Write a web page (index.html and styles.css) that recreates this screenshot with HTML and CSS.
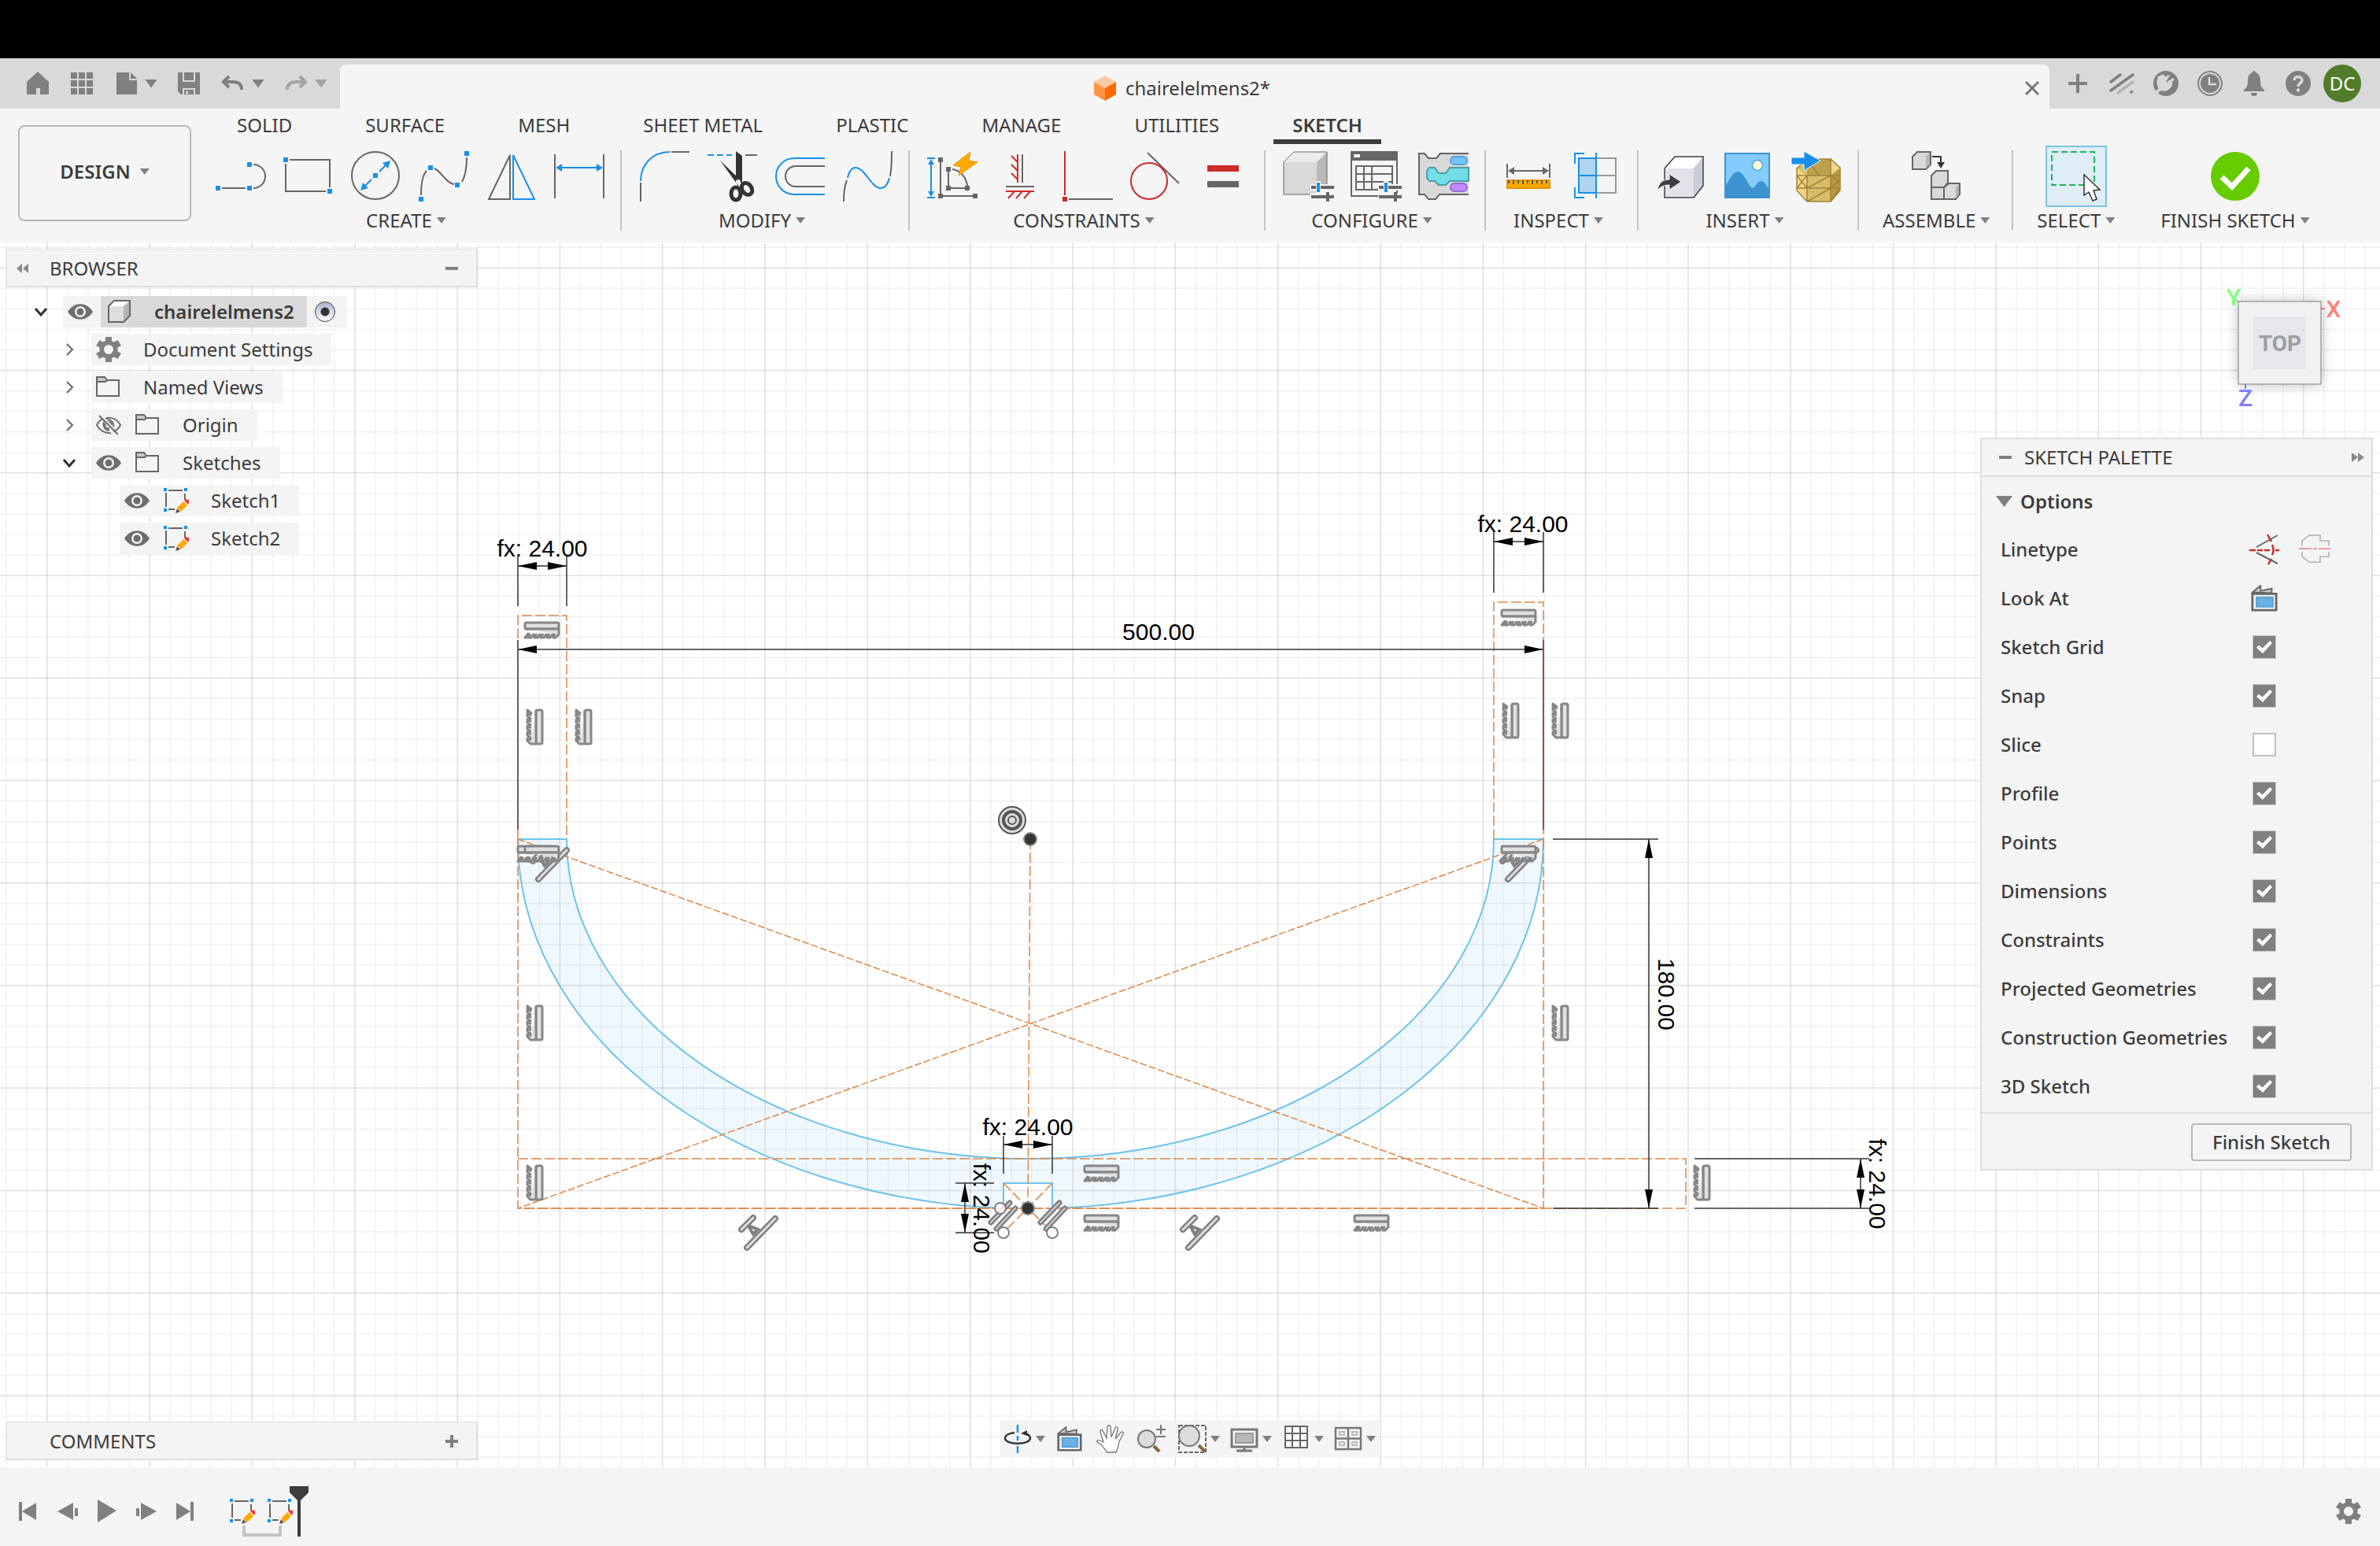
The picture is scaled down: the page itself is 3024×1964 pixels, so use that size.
FILE: index.html
```html
<!DOCTYPE html>
<html lang="en">
<head>
<meta charset="utf-8">
<title>chairelelmens2</title>
<link rel="stylesheet" href="styles.css">
</head>
<body>
<svg class="defs" aria-hidden="true">
  <symbol id="i-eye" viewBox="0 0 32 32"><path d="M0 16C8 3 24 3 32 16C24 29 8 29 0 16Z" fill="#6e6e6e"/><circle cx="16" cy="16" r="7" fill="#f4f4f4"/><circle cx="16" cy="16" r="4.500" fill="#6e6e6e"/></symbol>
  <symbol id="i-eye-off" viewBox="0 0 32 32"><path d="M12 7.500C20 5 27 9 31 16C29 20 26 23 22 24.500M19 26C11 27 4 22 1 16C3 12 6 9 9 8M10 12a8 8 0 0 0 7 11M14 9.500a7 7 0 0 1 8 9M12 14a4 4 0 0 0 5 6M16 12a4 4 0 0 1 4 4M4 4L28 28" fill="none" stroke="#6e6e6e" stroke-width="2"/></symbol>
  <symbol id="i-folder" viewBox="0 0 32 32"><path d="M1 9V3H11L14 7V9Z" fill="#c8c8c8" stroke="#666" stroke-width="2"/><path d="M1 9H12L14 7H29V27H1Z" fill="#f4f4f4" stroke="#666" stroke-width="2"/></symbol>
  <symbol id="i-gear" viewBox="0 0 32 32"><path fill-rule="evenodd" fill="#808080" d="M12 0H20V5L23 6.500L27.500 4L32 11L27.500 13.500V18.500L32 21L27.500 28L23 25.500L20 27V32H12V27L9 25.500L4.500 28L0 21L4.500 18.500V13.500L0 11L4.500 4L9 6.500L12 5ZM16 10a6 6 0 1 0 0 12a6 6 0 1 0 0-12Z"/></symbol>
  <symbol id="i-body" viewBox="0 0 32 32"><path d="M2 9L9 2H29L22 9Z" fill="#fff"/><path d="M2 9H21V29H2Z" fill="#dedede"/><path d="M21 9L29 2V21L21 29Z" fill="#b4b4b4"/><path d="M2 9L9 2H29V21L21 29H2Z" fill="none" stroke="#666" stroke-width="2"/></symbol>
  <symbol id="i-sketch" viewBox="0 0 32 32"><path d="M6 3H24M3 6V24M27 7V15M6 27H14" stroke="#666" stroke-width="2" fill="none"/><path d="M0 0h4v4H0zM26 0h4v4h-4zM0 26h4v4H0z" fill="#1890ea"/><path d="M17 25L25 17L30 22L22 30Z" fill="#fa0"/><path d="M17 26L21 30L15 32Z" fill="#555"/><path d="M26 16L28 14.500a3 3 0 0 1 4 4L31 21Z" fill="#f33"/></symbol>
  <symbol id="i-lookat" viewBox="0 0 36 36"><path d="M2 10L13 1V8L28 5V11Z" fill="#c8c8c8" stroke="#666" stroke-width="2"/><path d="M2 12H34V34H2Z" fill="#f4f4f4" stroke="#666" stroke-width="3"/><path d="M7.500 16.500H29.500V29.500H7.500Z" fill="#69b0e6" stroke="#5a9fd4" stroke-width="2"/></symbol>
  <symbol id="i-sliders" viewBox="0 0 32 28"><path d="M2 8H32M2 20H32" stroke="#f4f4f4" stroke-width="8"/><path d="M3 8H32M3 20H32M24 14V26" stroke="#666" stroke-width="4"/><path d="M12 0V16" stroke="#f4f4f4" stroke-width="6"/><path d="M12 2V14" stroke="#1890ea" stroke-width="4"/></symbol>
  <symbol id="g-hatch" viewBox="0 0 48 24" overflow="visible"><g fill="#e0e0e0" stroke="#868686" stroke-width="3" stroke-linejoin="round"><rect x="2" y="2" width="43" height="8" rx="2"/><path d="M2 10H45V17L41 21H38L40 16M38 16L34 21H30L33 16M30 16L26 21H22L25 16M22 16L18 21H14L17 16M14 16L10 21H6L9 16M6 16L4 21H2Z"/></g></symbol>
  <symbol id="g-perp" viewBox="0 0 52 48" overflow="visible"><g stroke-linecap="round" fill="none"><path d="M48 6L12 43M20 5L5 20" stroke="#808080" stroke-width="8"/><path d="M14 15L20 26L26 20Z" stroke="#808080" stroke-width="4"/><path d="M48 6L12 43M20 5L5 20" stroke="#ddd" stroke-width="3"/></g></symbol>
  <symbol id="g-par" viewBox="0 0 36 38" overflow="visible"><g stroke-linecap="round"><path d="M27 3L3 28M34 10L10 36" stroke="#808080" stroke-width="7"/><path d="M27 3L3 28M34 10L10 36" stroke="#ccc" stroke-width="2"/></g></symbol>
</svg>

<div class="letterbox"></div>

<header>
  <div class="titlebar">
    <nav class="quick" aria-label="Quick access">
      <button class="ico" aria-label="Home"><svg viewBox="0 0 32 32"><path d="M2 14L16 1L30 14V30H19V22H14V30H2Z" fill="#808080"/></svg></button>
      <button class="ico" aria-label="Data panel"><svg viewBox="0 0 32 32"><path d="M2 2h8v8H2zM12 2h8v8h-8zM22 2h8v8h-8zM2 12h8v8H2zM12 12h8v8h-8zM22 12h8v8h-8zM2 22h8v8H2zM12 22h8v8h-8zM22 22h8v8h-8z" fill="#808080"/></svg></button>
      <button class="ico split" aria-label="File"><svg viewBox="0 0 32 32"><path d="M4 2H20V12H30V30H4ZM22 2L30 10H22Z" fill="#808080"/></svg><i class="caret big"></i></button>
      <button class="ico" aria-label="Save"><svg viewBox="0 0 32 32"><path d="M2 2H8V14H24V2H30V30H24V22H8V30H6L2 26ZM10 2H22V12H10ZM10 24H22V30H10Z" fill="#808080"/><path d="M12 26h3v3h-3z" fill="#d9d9d9"/></svg></button>
      <button class="ico split" aria-label="Undo"><svg viewBox="0 0 32 32"><path d="M11 7L4 14L11 21M4 14H16C24 14 27 18 27 24" fill="none" stroke="#808080" stroke-width="4"/></svg><i class="caret big"></i></button>
      <button class="ico split dim" aria-label="Redo"><svg viewBox="0 0 32 32"><path d="M21 7L28 14L21 21M28 14H16C8 14 5 18 5 24" fill="none" stroke="#808080" stroke-width="4"/></svg><i class="caret big"></i></button>
    </nav>
    <div class="doc-tab">
      <div class="doc-title"><svg viewBox="0 0 28 32" width="28" height="32"><path d="M0 8L14 0L28 8L14 16Z" fill="#fcc9a4"/><path d="M0 8L14 16V32L0 24Z" fill="#ff944a"/><path d="M28 8L14 16V32L28 24Z" fill="#ff6a00"/></svg><span>chairelelmens2*</span></div>
      <button class="close" aria-label="Close"><svg viewBox="0 0 20 20" width="20" height="20"><path d="M2 2L18 18M18 2L2 18" stroke="#777" stroke-width="3"/></svg></button>
    </div>
    <nav class="account" aria-label="Account">
      <button class="ico" aria-label="New tab"><svg viewBox="0 0 32 32"><path d="M4 16H28M16 4V28" stroke="#808080" stroke-width="4"/></svg></button>
      <button class="ico" aria-label="Extensions"><svg viewBox="0 0 32 32" stroke-linecap="round" stroke-width="3.500"><path d="M2 14L14 5M2 25L30 5M28 27L28.500 26.500" stroke="#808080"/><path d="M11 28L30 14" stroke="#b4b4b4"/></svg></button>
      <button class="ico" aria-label="Online status"><svg viewBox="0 0 32 32"><circle cx="16" cy="16" r="16" fill="#808080"/><path d="M6 9L12 6L16 10L20 6M21 14L26 10M8 8C4 15 6 22 12 24C18 25 21 22 23 16L13 8Z" fill="#d9d9d9" stroke="#d9d9d9" stroke-width="3"/><path d="M17 14L21 8" stroke="#808080" stroke-width="2"/><path d="M10 22L2 29" stroke="#d9d9d9" stroke-width="4"/></svg></button>
      <button class="ico" aria-label="Job status"><svg viewBox="0 0 32 32"><circle cx="16" cy="16" r="15" fill="none" stroke="#808080" stroke-width="2"/><circle cx="16" cy="16" r="12" fill="#808080"/><path d="M15 8V17H24" fill="none" stroke="#d9d9d9" stroke-width="2.500"/></svg></button>
      <button class="ico" aria-label="Notifications"><svg viewBox="0 0 32 32"><path d="M14 2a2 2 0 0 1 4 0C23 4 24 8 24 14C24 20 26 22 29 24V26H3V24C6 22 8 20 8 14C8 8 9 4 14 2ZM12 28H20a4 4 0 0 1-8 0Z" fill="#808080"/></svg></button>
      <button class="ico" aria-label="Help"><svg viewBox="0 0 32 32"><circle cx="16" cy="16" r="16" fill="#808080"/><path d="M11 12C11 6 21 6 21 12C21 16 16 15 16 20" fill="none" stroke="#d9d9d9" stroke-width="3.500"/><circle cx="16" cy="24.500" r="2.200" fill="#d9d9d9"/></svg></button>
      <button class="avatar">DC</button>
    </nav>
  </div>

  <div class="toolbar">
    <button class="workspace">DESIGN<i class="caret"></i></button>
    <div class="ribbon">
      <nav class="tabs" aria-label="Toolbar tabs">
        <button>SOLID</button><button>SURFACE</button><button>MESH</button><button>SHEET METAL</button><button>PLASTIC</button><button>MANAGE</button><button>UTILITIES</button><button class="active">SKETCH</button>
      </nav>
      <div class="groups">
        <section class="group">
          <div class="tools">
            <button aria-label="Line"><svg viewBox="0 0 64 64"><path d="M8 47H38M48 17A15 15 0 0 1 48 47" class="g"/><path d="M0 44h6v6H0zM40 44h6v6h-6zM40 14h6v6h-6z" class="bf"/></svg></button>
            <button aria-label="Rectangle"><svg viewBox="0 0 64 64"><path d="M8 11H59V46M3 16V51H54" class="g"/><path d="M0 8h6v6H0zM56 48h6v6h-6z" class="bf"/></svg></button>
            <button aria-label="Circle"><svg viewBox="0 0 64 64"><circle cx="31" cy="31" r="30" class="g"/><path d="M36 26L45 17M26 36L17 45" class="b"/><path d="M28 28h6v6h-6zM50 12L40 15L47 22ZM12 50L15 40L22 47Z" class="bf"/></svg></button>
            <button aria-label="Spline"><svg viewBox="0 0 64 64"><path d="M3 56C3 40 5 30 10 25M20 22C30 27 34 40 45 42M55 39C60 30 61 20 61 8" class="g"/><path d="M0 58h6v6H0zM12 18h6v6h-6zM46 40h6v6h-6zM58 0h6v6h-6z" class="bf"/></svg></button>
            <button aria-label="Mirror"><svg viewBox="0 0 64 64"><path d="M30 5V61H3Z" class="g"/><path d="M34 5V61H61Z" class="b"/></svg></button>
            <button aria-label="Dimension"><svg viewBox="0 0 64 64"><path d="M1 4V60M63 4V60" class="g"/><path d="M8 21H56" class="b"/><path d="M2 21L10 16V26ZM62 21L54 16V26Z" class="bf"/></svg></button>
          </div>
          <button class="group-label">CREATE<i class="caret"></i></button>
        </section>
        <span class="sep"></span>
        <section class="group">
          <div class="tools">
            <button aria-label="Fillet"><svg viewBox="0 0 64 64"><path d="M2 40V64M41 1H64" class="g"/><path d="M2 38C2 18 16 1 39 1" class="b"/></svg></button>
            <button aria-label="Trim"><svg viewBox="0 0 64 64"><path d="M1 5H32" class="b" stroke-dasharray="8 4"/><path d="M49 5H64" class="g"/><path d="M37 0L45 6V40H37ZM17 12L40 34V44Z" fill="#333"/><g fill="none" stroke="#333" stroke-width="5"><ellipse cx="37" cy="54" rx="6" ry="8"/><ellipse cx="51" cy="48" rx="6" ry="8" transform="rotate(-35 51 48)"/></g><circle cx="40" cy="39" r="3" fill="#eee"/></svg></button>
            <button aria-label="Offset"><svg viewBox="0 0 64 64"><path d="M64 9H25A23 23 0 0 0 25 55H64" class="b"/><path d="M64 19H27A13 13 0 0 0 27 45H64" class="g"/></svg></button>
            <button aria-label="Edit spline"><svg viewBox="0 0 64 64"><path d="M2 64C2 54 3 44 6 37M61 32C63 22 63 10 63 0" class="g"/><path d="M7 34C9 25 12 21 17 21C29 21 37 47 49 47C55 47 58 42 60 34" class="b"/></svg></button>
          </div>
          <button class="group-label">MODIFY<i class="caret"></i></button>
        </section>
        <span class="sep"></span>
        <section class="group">
          <div class="tools">
            <button aria-label="Auto dimension"><svg viewBox="0 0 64 64"><path d="M17 11V57H61M27 23V47H51M32 23C42 24 50 34 51 44" class="g"/><path d="M0 9H10M0 59H10M5 14V54" class="b"/><path d="M5 10L9 17H1ZM5 58L9 51H1Z" class="bf"/><path d="M14 8h6v6h-6zM14 54h6v6h-6zM58 54h6v6h-6zM24 20h6v6h-6zM24 44h6v6h-6zM48 44h6v6h-6z" fill="#666"/><path d="M55 1L33 18L43 20L40 31L64 14L53 12Z" fill="#fa0" stroke="#e59400"/></svg></button>
            <button aria-label="Horizontal or vertical"><svg viewBox="0 0 64 64"><path d="M35 4V40M14 45H50" class="g"/><path d="M29 4V40M14 51H50M21 6L29 14M21 17L29 25M21 28L29 36M25 51L17 60M35 51L27 60M45 51L37 60" class="r"/></svg></button>
            <button aria-label="Perpendicular"><svg viewBox="0 0 64 64"><path d="M3 0V56" class="r"/><path d="M0 58h6v6H0z" fill="#cd2a2a"/><path d="M8 61H64" class="g"/></svg></button>
            <button aria-label="Tangent"><svg viewBox="0 0 64 64"><path d="M22 2L62 41" class="g"/><circle cx="24" cy="38" r="23" class="r"/></svg></button>
            <button aria-label="Equal"><svg viewBox="0 0 64 64"><path d="M12 18H52V26H12Z" fill="#cd2a2a"/><path d="M12 38H52V46H12Z" fill="#666"/></svg></button>
          </div>
          <button class="group-label">CONSTRAINTS<i class="caret"></i></button>
        </section>
        <span class="sep"></span>
        <section class="group">
          <div class="tools">
            <button aria-label="Configured body"><svg viewBox="0 0 64 64"><path d="M1 14L14 1H56L43 14Z" fill="#ececec"/><path d="M1 14H43V55H1Z" fill="#d9d9d9"/><path d="M43 14L56 1V42L43 55Z" fill="#b8b8b8"/><path d="M1 14L14 1H56V42L43 55H1Z" fill="none" stroke="#666"/><use href="#i-sliders" x="33" y="38" width="32" height="28"/></svg></button>
            <button aria-label="Configuration table"><svg viewBox="0 0 64 64"><path d="M1 1H59V57H1Z" class="g"/><path d="M0 0H60V12H0Z" fill="#666"/><path d="M4 4h8v4H4z" fill="#fff"/><path d="M7 19H53V49H7ZM7 29H53M7 39H53M17 19V49M27 19V49" class="g"/><use href="#i-sliders" x="33" y="38" width="32" height="28"/></svg></button>
            <button aria-label="Configuration rules"><svg viewBox="0 0 64 64"><path d="M64 3H28L23 9H13L8 3H1V55H8L13 61H22L27 55H64" fill="#d9d9d9" stroke="#666" stroke-width="2"/><path d="M64 21H40L35 28H26L21 21H14L11 25V34L14 38H21L26 43H35L40 38H64Z" fill="#73dde8" stroke="#48a0a8" stroke-width="2"/><rect x="41" y="7" width="21" height="10" rx="5" fill="#74c4ff" stroke="#559fd5" stroke-width="2"/><rect x="41" y="41" width="21" height="10" rx="5" fill="#be8cff" stroke="#956bd0" stroke-width="2"/></svg></button>
          </div>
          <button class="group-label">CONFIGURE<i class="caret"></i></button>
        </section>
        <span class="sep"></span>
        <section class="group">
          <div class="tools">
            <button aria-label="Measure"><svg viewBox="0 0 64 64"><path d="M5 16V34M59 16V34M10 25H54" class="g"/><path d="M6 25L14 20V30ZM58 25L50 20V30Z" fill="#666"/><path d="M5 37H59V47H5Z" fill="#fa0" stroke="#e59400" stroke-width="2"/><path d="M7 37V41M13 37V42M19 37V41M25 37V42M31 37V41M37 37V42M43 37V41M49 37V42M55 37V41" stroke="#555" stroke-width="2"/></svg></button>
            <button aria-label="Section analysis"><svg viewBox="0 0 64 64"><path d="M33 9H57V53H33M33 31H57" fill="none" stroke="#999" stroke-width="2"/><path d="M10 9H32V53H10Z" fill="#b1d5f0"/><path d="M10 9H32V53H10ZM10 31H32M32 2V60M5 16V3H17M5 46V59H17" class="b"/></svg></button>
          </div>
          <button class="group-label">INSPECT<i class="caret"></i></button>
        </section>
        <span class="sep"></span>
        <section class="group">
          <div class="tools">
            <button aria-label="Insert derive"><svg viewBox="0 0 64 64"><path d="M11 22L24 7H60L48 22Z" fill="#fff"/><path d="M11 22H48V59H11Z" fill="#e2e3e8"/><path d="M48 22L60 7V44L48 59Z" fill="#c9ccd6"/><path d="M11 22L24 7H60V44L48 59H11Z" fill="none" stroke="#3c3f44" stroke-width="1.500"/><path d="M2 50C3 41 8 36 17 36V29L32 39L17 49V43C10 43 6 45 2 50Z" fill="#3c3f44" stroke="#f4f4f4"/></svg></button>
            <button aria-label="Canvas"><svg viewBox="0 0 64 64"><path d="M2 3H58V59H2Z" fill="#84cbff" stroke="#3d93cf" stroke-width="2"/><path d="M2 45C10 32 13 26 18 26C26 26 32 46 37 47C41 46 43 38 47 38C52 38 54 42 58 50V59H2Z" fill="#3d93cf"/><circle cx="43" cy="18" r="6.500" fill="#fffdd0" stroke="#58a9dc" stroke-width="1.500"/></svg></button>
            <button aria-label="Insert mesh"><svg viewBox="0 0 64 64"><path d="M20 10H50L62 21V50L50 64H20L7 50V22Z" fill="#d8be69"/><path d="M20 10H50L62 21L50 31H20Z" fill="#bfa14b"/><path d="M50 31L62 21V50L50 64Z" fill="#b89840"/><path d="M7 22L20 31V64L7 50Z" fill="#f0d684"/><path d="M50 10L62 21L50 31Z" fill="#f0d684"/><path d="M20 10H50L62 21V50L50 64H20L7 50V22ZM7 31H62M7 47H62M20 31V64M50 10V64M20 47L50 31M20 64L50 47M36 31L20 12M50 31L62 40M50 47L62 36M50 64L62 46M7 31L20 47M7 47L20 31" fill="none" stroke="#a08238" stroke-width="1.500"/><path d="M0 8H16V0L37 12L16 25V17H0Z" fill="#1890ea" stroke="#f4f4f4"/></svg></button>
          </div>
          <button class="group-label">INSERT<i class="caret"></i></button>
        </section>
        <span class="sep"></span>
        <section class="group single">
          <div class="tools">
            <button aria-label="Joint"><svg viewBox="0 0 64 64"><g fill="#dadada" stroke="#666" stroke-width="2"><path d="M2 7L8 1H25V17L19 23H2Z"/><path d="M26 31L32 25H47V40L42 46V61H26Z"/><path d="M26 46H42L48 41H62V55L57 61H26Z"/><path d="M42 46V61"/></g><path d="M19 7L24 2V17L19 22ZM57 46L61 42V55L57 60Z" fill="#b4b4b4"/><path d="M27 7H38V15" fill="none" stroke="#333" stroke-width="2"/><path d="M33 14H43L38 22Z" fill="#333"/></svg></button>
          </div>
          <button class="group-label">ASSEMBLE<i class="caret"></i></button>
        </section>
        <span class="sep"></span>
        <section class="group single">
          <div class="tools">
            <button class="selected" aria-label="Select"><svg viewBox="0 0 64 64"><path d="M1 1H55V43H1Z" fill="none" stroke="#21b35a" stroke-width="2" stroke-dasharray="8 4"/><path d="M42 30V56L48 52L53 63L58 61L54 50L62 49Z" fill="#fff" stroke="#333" stroke-width="1.500"/></svg></button>
          </div>
          <button class="group-label">SELECT<i class="caret"></i></button>
        </section>
        <section class="group single">
          <div class="tools">
            <button aria-label="Finish sketch"><svg viewBox="0 0 64 64"><circle cx="32" cy="32" r="31" fill="#6c0"/><path d="M15 33L28 45L49 22" fill="none" stroke="#fff" stroke-width="7"/></svg></button>
          </div>
          <button class="group-label">FINISH SKETCH<i class="caret"></i></button>
        </section>
      </div>
    </div>
  </div>
</header>

<main class="stage">
  <svg class="drawing" role="img" aria-label="Sketch of a chair element">
    <g transform="translate(0 -308)">
      <g stroke-width="1600">
        <line x1="7" x2="100%" y1="1100" y2="1100" stroke="#000" stroke-opacity=".055" stroke-dasharray="1.500 24.564"/>
        <line x1="59" x2="100%" y1="1100" y2="1100" stroke="#000" stroke-opacity=".07" stroke-dasharray="1.500 128.820"/>
      </g>
      <g stroke-width="6400">
        <line x1="0" x2="0" y1="313.500" y2="2400" stroke="#000" stroke-opacity=".055" stroke-dasharray="1.500 24.550"/>
        <line x1="0" x2="0" y1="339.500" y2="2400" stroke="#000" stroke-opacity=".07" stroke-dasharray="1.500 128.750"/>
      </g>

      <path d="M658 1066A651 469 0 0 0 1275 1535V1503H1337V1535A651 469 0 0 0 1961 1066H1898A589 406 0 0 1 720 1066Z" fill="#35a8e8" fill-opacity=".08" stroke="#6ec3ea" stroke-width="2"/>

      <g fill="none" stroke="#dd8747" stroke-width="1.500" stroke-dasharray="13 4">
        <path d="M658 1066V782H720V1066"/>
        <path d="M1898 1066V765H1961V1066"/>
        <path d="M658 1066V1535H1961V1066"/>
        <path d="M658 1472H2142V1535H658"/>
        <path d="M658 1066L1961 1535M1961 1066L658 1535" stroke-dasharray="9 3"/>
        <path d="M1309 1066L1306 1535"/>
        <path d="M1275 1503L1337 1566M1337 1503L1275 1566"/>
      </g>

      <g fill="none" stroke="#333" stroke-width="1.500">
        <path d="M658 707V770M720 707V770M658 719H720"/>
        <path d="M1898 676V753M1961 676V753M1898 688H1961"/>
        <path d="M658 825H1961"/>
        <path d="M658 813V1054M1961 813V1054" stroke="#7d5c45" stroke-width="2"/>
        <path d="M1973 1066H2107M1973 1535H2107M2095 1066V1535"/>
        <path d="M2153 1472H2375M2153 1535H2375M2364 1472V1535"/>
        <path d="M1275 1443V1491M1337 1443V1491M1275 1454H1337"/>
        <path d="M1214 1503H1263M1214 1566H1263M1226 1503V1566"/>
      </g>
      <path d="M658 719l24-5v10zM720 719l-24-5v10zM1898 688l24-5v10zM1961 688l-24-5v10zM658 825l24-5v10zM1961 825l-24-5v10zM2095 1066l-5 24h10zM2095 1535l-5-24h10zM2364 1472l-5 24h10zM2364 1535l-5-24h10zM1275 1454l24-5v10zM1337 1454l-24-5v10zM1226 1503l-5 24h10zM1226 1566l-5-24h10z"/>

      <use href="#g-hatch" x="665" y="789" width="48" height="24"/>
      <use href="#g-hatch" x="1906" y="773" width="48" height="24"/>
      <use href="#g-hatch" x="656" y="1073" width="48" height="24"/>
      <use href="#g-perp" x="672" y="1074" width="52" height="48"/>
      <use href="#g-hatch" x="665" y="1073" width="48" height="24"/>
      <use href="#g-perp" x="1904" y="1074" width="52" height="48"/>
      <use href="#g-hatch" x="1906" y="1073" width="48" height="24"/>
      <use href="#g-hatch" x="1376" y="1479" width="48" height="24"/>
      <use href="#g-hatch" x="1376" y="1542" width="48" height="24"/>
      <use href="#g-hatch" x="1719" y="1542" width="48" height="24"/>
      <g transform="rotate(90)">
        <use href="#g-hatch" x="900" y="-691" width="48" height="24"/>
        <use href="#g-hatch" x="900" y="-753" width="48" height="24"/>
        <use href="#g-hatch" x="892" y="-1931" width="48" height="24"/>
        <use href="#g-hatch" x="892" y="-1994" width="48" height="24"/>
        <use href="#g-hatch" x="1276" y="-691" width="48" height="24"/>
        <use href="#g-hatch" x="1276" y="-1994" width="48" height="24"/>
        <use href="#g-hatch" x="1479" y="-691" width="48" height="24"/>
        <use href="#g-hatch" x="1479" y="-2174" width="48" height="24"/>
      </g>
      <use href="#g-perp" x="937" y="1542" width="52" height="48"/>
      <use href="#g-perp" x="1498" y="1542" width="52" height="48"/>
      <use href="#g-par" x="1256" y="1525" width="36" height="38"/>
      <use href="#g-par" x="1319" y="1525" width="36" height="38"/>

      <g fill="#fff" fill-opacity=".8" stroke="#808080" stroke-width="2"><circle cx="1271" cy="1535" r="7"/><circle cx="1275" cy="1566" r="7"/><circle cx="1337" cy="1566" r="7"/></g>
      <g fill="#333" stroke="#888" stroke-width="2"><circle cx="1309" cy="1066" r="8"/><circle cx="1306" cy="1535" r="8"/></g>
      <g fill="none" stroke="#555" stroke-width="2"><circle cx="1286" cy="1042" r="17" fill="#ddd"/><circle cx="1286" cy="1042" r="11" stroke-width="4"/><circle cx="1286" cy="1042" r="5"/></g>

      <g class="dims">
        <text x="689" y="707">fx: 24.00</text>
        <text x="1935" y="676">fx: 24.00</text>
        <text x="1472" y="813">500.00</text>
        <text x="1306" y="1442">fx: 24.00</text>
        <text transform="translate(2107 1263) rotate(90)">180.00</text>
        <text transform="translate(2375 1504) rotate(90)">fx: 24.00</text>
        <text transform="translate(1237 1535) rotate(90)">fx: 24.00</text>
      </g>
    </g>
  </svg>

  <aside class="left">
    <section>
      <div class="panel-head">
        <button class="collapse" aria-label="Collapse browser"><svg viewBox="0 0 16 14" width="16" height="14"><path d="M7 1V13L0 7ZM15 1V13L8 7Z" fill="#8a8a8a"/></svg></button>
        <h2>BROWSER</h2>
        <button aria-label="Minimize"><svg viewBox="0 0 16 16" width="16" height="16"><path d="M0 8H16" stroke="#808080" stroke-width="4"/></svg></button>
      </div>
      <ul class="tree">
        <li class="root"><button class="twisty open" aria-label="Collapse"><svg viewBox="0 0 16 16"><path d="M1 4L8 12L15 4" /></svg></button><div class="node"><svg><use href="#i-eye"/></svg><div class="current"><svg><use href="#i-body"/></svg><span>chairelelmens2</span></div><input type="radio" checked aria-label="Activate component"></div></li>
        <li><button class="twisty" aria-label="Expand"><svg viewBox="0 0 16 16"><path d="M5 1L12 8L5 15"/></svg></button><div class="node"><svg><use href="#i-gear"/></svg><span>Document Settings</span></div></li>
        <li><button class="twisty" aria-label="Expand"><svg viewBox="0 0 16 16"><path d="M5 1L12 8L5 15"/></svg></button><div class="node"><svg><use href="#i-folder"/></svg><span>Named Views</span></div></li>
        <li><button class="twisty" aria-label="Expand"><svg viewBox="0 0 16 16"><path d="M5 1L12 8L5 15"/></svg></button><div class="node"><svg><use href="#i-eye-off"/></svg><svg><use href="#i-folder"/></svg><span>Origin</span></div></li>
        <li><button class="twisty open" aria-label="Collapse"><svg viewBox="0 0 16 16"><path d="M1 4L8 12L15 4"/></svg></button><div class="node"><svg><use href="#i-eye"/></svg><svg><use href="#i-folder"/></svg><span>Sketches</span></div></li>
        <li class="leaf"><div class="node"><svg><use href="#i-eye"/></svg><svg><use href="#i-sketch"/></svg><span>Sketch1</span></div></li>
        <li class="leaf"><div class="node"><svg><use href="#i-eye"/></svg><svg><use href="#i-sketch"/></svg><span>Sketch2</span></div></li>
      </ul>
    </section>
    <div class="panel-head comments">
      <h2>COMMENTS</h2>
      <button aria-label="Expand comments"><svg viewBox="0 0 16 16" width="16" height="16"><path d="M0 8H16M8 0V16" stroke="#808080" stroke-width="4"/></svg></button>
    </div>
  </aside>

  <nav class="navbar" aria-label="Navigation">
    <button class="split" aria-label="Orbit"><svg viewBox="0 0 36 36"><path d="M18 0V10M18 14V20M18 27V36" stroke="#1890ea" stroke-width="2.500"/><path d="M14 10C6 11 2 13 2 17C2 26 34 26 34 17C34 14 31 12 26 10" fill="none" stroke="#333" stroke-width="2.500"/><path d="M22 11L30 7V14Z" fill="#333"/></svg><i class="caret"></i></button>
    <button aria-label="Look at"><svg viewBox="0 0 36 36"><use href="#i-lookat" x="2" y="2" width="32" height="32"/></svg></button>
    <button aria-label="Pan"><svg viewBox="0 0 36 36"><path d="M14 35C11 31 9 29 7 26L1 22C0 20 2 19 4 20L9 22L5 9C5 6 8 6 9 9L13 17L14 3C14 0 18 0 18 3L19 16L24 4C25 2 28 3 27 6L24 18L31 10C33 8 35 9 34 12L29 21C28 27 27 31 25 35Z" fill="#fff" stroke="#777" stroke-width="1.300"/></svg></button>
    <button aria-label="Zoom"><svg viewBox="0 0 36 36"><circle cx="12" cy="18" r="11" fill="#ddd" stroke="#777" stroke-width="2"/><path d="M21 27L28 34" stroke="#86663c" stroke-width="4"/><path d="M24 6H36M30 0V12M24 15H36" stroke="#777" stroke-width="2"/></svg></button>
    <button class="split" aria-label="Fit"><svg viewBox="0 0 36 36"><path d="M1 1H35V35H1Z" fill="none" stroke="#666" stroke-width="2" stroke-dasharray="5 2"/><circle cx="14" cy="14" r="13" fill="#ddd" stroke="#777" stroke-width="2"/><path d="M26 26L34 34" stroke="#86663c" stroke-width="4"/></svg><i class="caret"></i></button>
    <button class="split" aria-label="Display settings"><svg viewBox="0 0 36 36"><path d="M2 6H34V28H2Z" fill="#f4f4f4" stroke="#777" stroke-width="3"/><path d="M7 11H29V23H7Z" fill="#b8b8b8" stroke="#999" stroke-width="2"/><path d="M18 29V33M8 33H28" stroke="#777" stroke-width="3"/></svg><i class="caret"></i></button>
    <button class="split" aria-label="Grid"><svg viewBox="0 0 36 36"><path d="M4 2H32V29H4ZM4 11H32M4 20H32M13 2V29M23 2V29" fill="#fff" stroke="#666" stroke-width="2"/></svg><i class="caret"></i></button>
    <button class="split" aria-label="Viewports"><svg viewBox="0 0 36 36"><path d="M2 4H34V31H2ZM2 17.500H34M18 4V31" fill="#f4f4f4" stroke="#777" stroke-width="2.500"/><path d="M7 9H13V13H7ZM23 9H29V13H23ZM7 22H13V26H7ZM23 22H29V26H23Z" fill="none" stroke="#bbb" stroke-width="2"/></svg><i class="caret"></i></button>
  </nav>

  <aside class="right">
    <svg class="viewcube" viewBox="0 0 160 170" width="160" height="170" role="img" aria-label="View cube">
      <path d="M29 30V134" stroke="#8080ff" stroke-width="2"/>
      <path d="M118 32H130" stroke="#ff8080" stroke-width="2"/>
      <path d="M12 17L22 25" stroke="#80ff80" stroke-width="2"/>
      <rect class="cube" x="20" y="23" width="105" height="105" fill="#f0f0f1" stroke="#808080"/>
      <rect x="39" y="42" width="67" height="67" fill="#e6e7eb"/>
      <text x="73" y="86" class="face">TOP</text>
      <text x="14" y="28" class="axis" fill="#80ff80">Y</text>
      <text x="141" y="43" class="axis" fill="#ff8080">X</text>
      <text x="29" y="156" class="axis" fill="#8080ff">Z</text>
    </svg>
    <section class="palette">
      <div class="palette-head">
        <button aria-label="Minimize"><svg viewBox="0 0 16 16" width="16" height="16"><path d="M0 8H16" stroke="#808080" stroke-width="4"/></svg></button>
        <h2>SKETCH PALETTE</h2>
        <button aria-label="Expand palette"><svg viewBox="0 0 16 14" width="16" height="14"><path d="M0 1V13L8 7ZM8 1V13L16 7Z" fill="#8a8a8a"/></svg></button>
      </div>
      <div class="palette-body">
        <h3><i></i>Options</h3>
        <div class="row"><span>Linetype</span>
          <button aria-label="Construction"><svg viewBox="0 0 40 40" width="40" height="40"><path d="M10 17L37 2M10 24L37 38" stroke="#666" stroke-width="2"/><path d="M1 21H9M11 21H18M20 21H27M34 21H39M30 14C32 18 32 23 30 27M24 1L29 10M29 32L25 39" fill="none" stroke="#cd2a2a" stroke-width="2.500"/></svg></button>
          <button aria-label="Centerline"><svg viewBox="0 0 40 40" width="40" height="40"><path d="M4 15V9L13 2H27V9H38V15M4 23V29L13 36H27V29H38V23" fill="none" stroke="#c0c0c0" stroke-width="2"/><path d="M0 19H16M18 19H23M25 19H40" stroke="#e8a0a0" stroke-width="2"/></svg></button>
        </div>
        <div class="row"><span>Look At</span><button aria-label="Look at"><svg viewBox="0 0 36 36" width="34" height="34"><use href="#i-lookat"/></svg></button></div>
        <div class="row"><label for="c1">Sketch Grid</label><input id="c1" type="checkbox" checked></div>
        <div class="row"><label for="c2">Snap</label><input id="c2" type="checkbox" checked></div>
        <div class="row"><label for="c3">Slice</label><input id="c3" type="checkbox"></div>
        <div class="row"><label for="c4">Profile</label><input id="c4" type="checkbox" checked></div>
        <div class="row"><label for="c5">Points</label><input id="c5" type="checkbox" checked></div>
        <div class="row"><label for="c6">Dimensions</label><input id="c6" type="checkbox" checked></div>
        <div class="row"><label for="c7">Constraints</label><input id="c7" type="checkbox" checked></div>
        <div class="row"><label for="c8">Projected Geometries</label><input id="c8" type="checkbox" checked></div>
        <div class="row"><label for="c9">Construction Geometries</label><input id="c9" type="checkbox" checked></div>
        <div class="row"><label for="c10">3D Sketch</label><input id="c10" type="checkbox" checked></div>
      </div>
      <div class="palette-foot"><button>Finish Sketch</button></div>
    </section>
  </aside>
</main>

<footer class="timeline">
  <div class="playback">
    <button aria-label="Go to start"><svg viewBox="0 0 28 32"><path d="M2 4H6V28H2ZM24 5V27L6 16Z"/></svg></button>
    <button aria-label="Step back"><svg viewBox="0 0 28 32"><path d="M21 5V27L1 16ZM23 12H27V22H23Z"/></svg></button>
    <button aria-label="Play"><svg viewBox="0 0 28 32"><path d="M2 1V30L26 15Z"/></svg></button>
    <button aria-label="Step forward"><svg viewBox="0 0 28 32"><path d="M7 5V27L27 16ZM1 12H5V22H1Z"/></svg></button>
    <button aria-label="Go to end"><svg viewBox="0 0 28 32"><path d="M20 4H24V28H20ZM2 5V27L20 16Z"/></svg></button>
  </div>
  <div class="features">
    <button aria-label="Sketch1"><svg><use href="#i-sketch"/></svg></button>
    <button aria-label="Sketch2"><svg><use href="#i-sketch"/></svg></button>
    <i class="bracket"></i>
    <svg class="marker" viewBox="0 0 24 64" width="24" height="64"><path d="M0 0H24V8L14 18V64H10V18L0 8Z" fill="#3c3c3c"/></svg>
  </div>
  <button class="settings" aria-label="Timeline settings"><svg><use href="#i-gear"/></svg></button>
</footer>
</body>
</html>
```
FILE: styles.css
```css
* { box-sizing: border-box; }

body {
  margin: 0;
  min-height: 100vh;
  display: flex;
  flex-direction: column;
  background: #fff;
  color: #3c3c3c;
  font: 24px/32px "Noto Sans", "Open Sans", sans-serif;
}

button {
  margin: 0;
  padding: 0;
  border: 0;
  background: none;
  color: inherit;
  font: inherit;
  display: flex;
  align-items: center;
  justify-content: center;
}

svg { display: block; flex: none; }
h2, h3 { margin: 0; font-size: 24px; line-height: 32px; font-weight: 400; }
.defs { position: absolute; width: 0; height: 0; }

.caret {
  width: 12px;
  height: 8px;
  background: #808080;
  clip-path: polygon(0 0, 100% 0, 50% 100%);
}
.caret.big { width: 16px; height: 11px; }

.letterbox { height: 74px; background: #000; }

/* title bar */
.titlebar { display: flex; height: 64px; background: #d9d9d9; }
.quick { display: flex; align-items: center; gap: 24px; padding: 0 16px 0 32px; }
.ico svg { width: 32px; height: 32px; }
.split { gap: 8px; }
.dim { opacity: .6; }
.doc-tab {
  flex: 1;
  align-self: flex-end;
  height: 56px;
  display: flex;
  align-items: center;
  padding: 4px 12px 0 0;
  background: #f5f5f5;
  border-radius: 8px 8px 0 0;
}
.doc-title { flex: 1; display: flex; align-items: center; justify-content: center; gap: 12px; }
.account { display: flex; align-items: center; gap: 24px; padding: 0 24px 0 20px; }
.avatar {
  width: 48px;
  height: 48px;
  margin-left: -8px;
  border-radius: 50%;
  background: #527c2a;
  color: #fff;
}

/* toolbar */
.toolbar { display: flex; background: #f5f5f5; padding-bottom: 12px; }
.workspace {
  width: 220px;
  height: 122px;
  margin: 21px 9px 0 23px;
  padding-bottom: 4px;
  gap: 12px;
  border: 2px solid #b8b8b8;
  border-radius: 8px;
  font-weight: 600;
}
.ribbon { flex: 1; }
.tabs { display: flex; gap: 45px; padding-left: 25px; height: 47px; }
.tabs button { height: 45px; padding: 2px 24px 0; border-bottom: 6px solid transparent; white-space: nowrap; }
.tabs .active { border-color: #3c3c3c; font-weight: 600; }
.groups { display: flex; }
.group { padding: 0 20px 0 22px; display: flex; flex-direction: column; align-items: center; gap: 1px; }
.group.single { padding: 0 28px 0 30px; }
.tools { display: flex; align-items: center; gap: 22px; height: 78px; }
.tools svg { width: 64px; height: 64px; overflow: visible; }
.selected { width: 78px; height: 78px; background: #deedf6; border: 2px solid #7cc4e2; }
.group-label { gap: 6px; padding-right: 10px; white-space: nowrap; }
.single .group-label { padding-right: 0; }
.sep { width: 2px; margin: 6px 0 3px; background: #c4c4c4; }
.g { fill: none; stroke: #666; stroke-width: 2; }
.b { fill: none; stroke: #1890ea; stroke-width: 2; }
.r { fill: none; stroke: #cd2a2a; stroke-width: 2; }
.bf { fill: #1890ea; }

/* canvas */
.stage {
  position: relative;
  flex: 1;
  display: grid;
  grid-template-columns: 1fr auto 1fr;
  padding: 8px 9px 9px 8px;
}
.drawing { position: absolute; inset: 0; width: 100%; height: 100%; }
.dims { font: 30px "Liberation Sans", Arial, sans-serif; fill: #000; text-anchor: middle; }
.left, .right, .navbar { position: relative; }

.left { display: flex; flex-direction: column; justify-content: space-between; }
.panel-head {
  position: relative;
  width: 599px;
  height: 49px;
  display: flex;
  align-items: center;
  padding: 1px 23px 0 12px;
  background: #f4f4f4;
  border: 1px solid #dedede;
  border-width: 1px 2px 2px 1px;
}
.panel-head h2 { flex: 1; padding-left: 26px; }
.comments h2 { padding-left: 42px; }

.tree { list-style: none; margin: 11px 0 0; padding: 0; display: flex; flex-direction: column; gap: 8px; }
.tree li { display: flex; align-items: center; height: 40px; padding-left: 72px; }
.tree .root { padding-left: 36px; }
.tree .leaf { padding-left: 144px; }
.twisty { width: 36px; justify-content: flex-start; }
.twisty svg { width: 16px; height: 16px; fill: none; stroke: #666; stroke-width: 2; }
.twisty.open svg { stroke: #333; stroke-width: 3; }
.node { height: 40px; display: flex; align-items: center; gap: 18px; padding: 0 24px 0 6px; background: #f4f4f4; }
.node svg { width: 32px; height: 32px; }
.node span { padding-left: 10px; }
.root .node { padding-right: 15px; gap: 10px; }
.current { height: 40px; display: flex; align-items: center; gap: 18px; padding: 0 16px 0 8px; background: #d9d9d9; font-weight: 600; }
.node input {
  appearance: none;
  width: 26px;
  height: 26px;
  margin: 0;
  border: 1px solid #444;
  border-radius: 50%;
  background: radial-gradient(circle, #333 0 5px, transparent 6px), linear-gradient(#aab4cc, #fff);
}

.navbar {
  align-self: end;
  margin-bottom: 3px;
  height: 48px;
  display: flex;
  align-items: center;
  gap: 16px;
  padding: 0 7px 0 4px;
  background: #f4f4f4;
}
.navbar svg { width: 36px; height: 36px; }
.navbar .split { gap: 5px; margin-right: -3px; }

.right { display: flex; flex-direction: column; align-items: flex-end; padding-top: 44px; }
.viewcube { margin-right: 31px; overflow: visible; }
.cube { filter: drop-shadow(0 0 8px rgba(0, 0, 0, .25)); }
.face { font: bold 28px "Liberation Sans Narrow", "Roboto", sans-serif; fill: #9a9ea6; text-anchor: middle; }
.axis { font: 500 30px "Liberation Sans Narrow", "Roboto", sans-serif; text-anchor: middle; }

.palette { width: 499px; margin-top: 26px; background: #f4f4f4; border: 2px solid #dedede; }
.palette-head { display: flex; align-items: center; height: 48px; padding: 0 9px 0 22px; border-bottom: 2px solid #dedede; }
.palette-head h2 { flex: 1; padding-left: 16px; }
.palette-body { padding-bottom: 1px; border-bottom: 2px solid #dedede; font-weight: 500; }
.palette-body h3 { height: 62px; display: flex; align-items: center; gap: 10px; padding-left: 18px; font-weight: 600; }
.palette-body h3 i { width: 21px; height: 14px; background: #808080; clip-path: polygon(0 0, 100% 0, 50% 100%); }
.row {
  height: 62px;
  display: grid;
  grid-template-columns: 1fr 40px 40px;
  column-gap: 24px;
  align-items: center;
  justify-items: center;
  padding: 0 52px 2px 24px;
}
.row span, .row label { justify-self: start; white-space: nowrap; }
.row input {
  appearance: none;
  width: 30px;
  height: 30px;
  margin: 0;
  border: 2px solid #c0c0c0;
  background: #fff;
}
.row input:checked { background: #808080; border: 1px solid #c8c8c8; }
.row input:checked::before {
  content: "";
  display: block;
  width: 20px;
  height: 16px;
  margin: 6px 4px;
  background: #fff;
  clip-path: polygon(0 55%, 15% 36%, 38% 60%, 86% 0, 100% 18%, 40% 100%);
}
.palette-foot { display: flex; justify-content: flex-end; padding: 12px 25px 10px 0; font-weight: 500; }
.palette-foot button { width: 204px; height: 48px; border: 2px solid #b8b8b8; border-radius: 4px; }

/* timeline */
.timeline { height: 100px; display: flex; align-items: center; padding: 12px 24px 0 22px; background: #f4f4f4; }
.playback { display: flex; gap: 22px; fill: #808080; }
.playback svg { width: 28px; height: 32px; }
.features { position: relative; flex: 1; display: flex; gap: 16px; margin-left: 42px; }
.features button svg, .settings svg { width: 32px; height: 32px; }
.bracket { position: absolute; left: 16px; top: 34px; width: 50px; height: 14px; border: 4px solid #c4c4c4; border-top: 0; }
.marker { position: absolute; left: 76px; top: -16px; }
```
